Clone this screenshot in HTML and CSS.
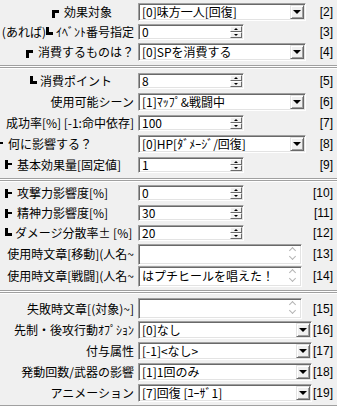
FILE: index.html
```html
<!DOCTYPE html>
<html lang="ja">
<head>
    <meta charset="UTF-8">
    <meta name="viewport" content="width=device-width, initial-scale=1.0">
    <title>スキル設定</title>
    <link rel="stylesheet" href="styles.css">
</head>
<body>

<div class="panel">

    <div class="group g1">
        <div class="row">
            <div class="lbl lbl-in"><span class="bx bx-tl"></span>効果対象</div>
            <div class="combo"><span class="val">[0]味方一人[回復]</span><span class="drop"><i class="tri"></i></span></div>
            <div class="num">[2]</div>
        </div>
        <div class="row">
            <div class="lbl">(あれば) <span class="bx bx-bl"></span>ｲﾍﾞﾝﾄ番号指定</div>
            <div class="spin"><span class="val">0</span><span class="arrows"><b class="up"></b><b class="dn"></b></span></div>
            <div class="num">[3]</div>
        </div>
        <div class="row">
            <div class="lbl"><span class="bx bx-tl"></span>消費するものは？</div>
            <div class="combo"><span class="val">[0]SPを消費する</span><span class="drop"><i class="tri"></i></span></div>
            <div class="num">[4]</div>
        </div>
    </div>

    <div class="sep"></div>

    <div class="group g2">
        <div class="row">
            <div class="lbl lbl-in"><span class="bx bx-bl"></span>消費ポイント</div>
            <div class="spin"><span class="val">8</span><span class="arrows"><b class="up"></b><b class="dn"></b></span></div>
            <div class="num">[5]</div>
        </div>
        <div class="row">
            <div class="lbl">使用可能シーン</div>
            <div class="combo"><span class="val">[1]ﾏｯﾌﾟ&amp;戦闘中</span><span class="drop"><i class="tri"></i></span></div>
            <div class="num">[6]</div>
        </div>
        <div class="row">
            <div class="lbl">成功率[%] [-1:命中依存]</div>
            <div class="spin"><span class="val">100</span><span class="arrows"><b class="up"></b><b class="dn"></b></span></div>
            <div class="num">[7]</div>
        </div>
        <div class="row">
            <div class="lbl lbl-left lbl-edge"><span class="bx bx-t"></span>何に影響する？</div>
            <div class="combo"><span class="val">[0]HP[ﾀﾞﾒｰｼﾞ/回復]</span><span class="drop"><i class="tri"></i></span></div>
            <div class="num">[8]</div>
        </div>
        <div class="row">
            <div class="lbl lbl-left"><span class="bx bx-t"></span>基本効果量[固定値]</div>
            <div class="spin"><span class="val">1</span><span class="arrows"><b class="up"></b><b class="dn"></b></span></div>
            <div class="num">[9]</div>
        </div>
    </div>

    <div class="sep"></div>

    <div class="group g3">
        <div class="row">
            <div class="lbl lbl-left"><span class="bx bx-t"></span>攻撃力影響度[%]</div>
            <div class="spin"><span class="val">0</span><span class="arrows"><b class="up"></b><b class="dn"></b></span></div>
            <div class="num">[10]</div>
        </div>
        <div class="row">
            <div class="lbl lbl-left"><span class="bx bx-t"></span>精神力影響度[%]</div>
            <div class="spin"><span class="val">30</span><span class="arrows"><b class="up"></b><b class="dn"></b></span></div>
            <div class="num">[11]</div>
        </div>
        <div class="row">
            <div class="lbl lbl-left"><span class="bx bx-bl"></span>ダメージ分散率± [%]</div>
            <div class="spin"><span class="val">20</span><span class="arrows"><b class="up"></b><b class="dn"></b></span></div>
            <div class="num">[12]</div>
        </div>
        <div class="row row-memo">
            <div class="lbl">使用時文章[移動](人名~</div>
            <div class="memo"><span class="val"></span><span class="sbar"><i class="chev-up"></i><i class="chev-dn"></i></span></div>
            <div class="num">[13]</div>
        </div>
        <div class="row row-memo">
            <div class="lbl">使用時文章[戦闘](人名~</div>
            <div class="memo"><span class="val">はプチヒールを唱えた！</span><span class="sbar"><i class="chev-up"></i><i class="chev-dn"></i></span></div>
            <div class="num">[14]</div>
        </div>
    </div>

    <div class="sep"></div>

    <div class="group g4">
        <div class="row row-memo">
            <div class="lbl">失敗時文章[(対象)~]</div>
            <div class="memo"><span class="val"></span><span class="sbar"><i class="chev-up"></i><i class="chev-dn"></i></span></div>
            <div class="num">[15]</div>
        </div>
        <div class="row">
            <div class="lbl">先制・後攻行動ｵﾌﾟｼｮﾝ</div>
            <div class="combo combo-wide"><span class="val">[0]なし</span><span class="drop"><i class="tri"></i></span></div>
            <div class="num">[16]</div>
        </div>
        <div class="row">
            <div class="lbl">付与属性</div>
            <div class="combo combo-wide"><span class="val">[-1]&lt;なし&gt;</span><span class="drop"><i class="tri"></i></span></div>
            <div class="num">[17]</div>
        </div>
        <div class="row">
            <div class="lbl">発動回数/武器の影響</div>
            <div class="combo combo-wide"><span class="val">[1]1回のみ</span><span class="drop"><i class="tri"></i></span></div>
            <div class="num">[18]</div>
        </div>
        <div class="row">
            <div class="lbl">アニメーション</div>
            <div class="combo combo-wide"><span class="val">[7]回復 [ﾕｰｻﾞ1]</span><span class="drop"><i class="tri"></i></span></div>
            <div class="num">[19]</div>
        </div>
    </div>

    <div class="sep"></div>

    <div class="caption">■■■追加効果の設定■■■</div>

</div>

</body>
</html>
```

FILE: styles.css
```css
body {
    margin: 0;
    background: #f0f0f0;
    font-family: "Noto Sans CJK JP", "Noto Sans", sans-serif;
    font-size: 12px;
    color: #000;
    overflow: hidden;
}

.panel {
    width: 337px;
    height: 407px;
    overflow: hidden;
}

.group {
    display: flex;
    flex-direction: column;
}

.g1 {
    padding: 2px 0 3px;
}

.g2,
.g3 {
    padding: 1px 0 3px;
}

.g4 {
    padding: 4px 0 2px;
}

.row {
    display: flex;
    align-items: center;
    height: 20px;
}

.g2 .row,
.g4 .row {
    height: 21px;
}

.row-memo {
    height: 22px;
}

.sep {
    height: 2px;
    border-top: 1px solid #a0a0a0;
    border-bottom: 1px solid #fff;
    background: linear-gradient(#fff 50%, #a0a0a0 50%);
}

/* labels */
.lbl {
    width: 138px;
    box-sizing: border-box;
    padding-right: 4px;
    display: flex;
    align-items: center;
    justify-content: flex-end;
    white-space: nowrap;
    line-height: 14px;
}

.lbl-in {
    padding-right: 26px;
}

.lbl-left {
    justify-content: flex-start;
    padding-left: 5px;
}

.lbl-edge {
    padding-left: 0;
}

.lbl-edge .bx {
    margin-left: -4px;
}

.bx {
    display: inline-block;
    box-sizing: border-box;
    width: 7px;
    height: 8px;
    margin-right: 5px;
    border-color: #000;
    border-style: solid;
    border-width: 0;
}

.bx-tl {
    border-top-width: 3px;
    border-left-width: 3px;
    margin-top: 4px;
}

.bx-bl {
    border-bottom-width: 3px;
    border-left-width: 3px;
    margin-top: -2px;
    margin-right: 3px;
}

.bx-t {
    border-left-width: 3px;
    height: 9px;
    background: linear-gradient(#000, #000) 0 3px / 100% 2px no-repeat;
}

/* number column */
.num {
    margin-left: auto;
    padding-right: 4px;
    font-family: "Liberation Sans", sans-serif;
    font-size: 12px;
}

/* shared sunken edit frame */
.combo,
.spin,
.memo {
    position: relative;
    box-sizing: border-box;
    background: #fff;
    border: 1px solid;
    border-color: #a0a0a0 #fff #fff #a0a0a0;
    box-shadow: inset 1px 1px #696969, inset -1px -1px #e3e3e3;
    display: flex;
    align-items: center;
}

.combo {
    width: 168px;
    height: 18px;
}

.combo-wide {
    width: 174px;
}

.val {
    padding-left: 3px;
    white-space: nowrap;
    line-height: 14px;
}

.drop {
    margin-left: auto;
    margin-right: 1px;
    box-sizing: border-box;
    width: 14px;
    height: 14px;
    background: #f0f0f0;
    border: 1px solid;
    border-color: #e3e3e3 #696969 #696969 #e3e3e3;
    box-shadow: inset 1px 1px #fff, inset -1px -1px #a0a0a0;
    display: flex;
    align-items: center;
    justify-content: center;
}

.tri {
    width: 0;
    height: 0;
    border-left: 4px solid transparent;
    border-right: 4px solid transparent;
    border-top: 4px solid #000;
}

/* spin edit */
.spin {
    width: 106px;
    height: 16px;
}

.arrows {
    margin-left: auto;
    margin-right: 1px;
    width: 12px;
    height: 12px;
    display: flex;
    flex-direction: column;
}

.arrows b {
    flex: 1;
    box-sizing: border-box;
    background: #f0f0f0;
    border: 1px solid;
    border-color: #fff #696969 #696969 #fff;
    display: flex;
    align-items: center;
    justify-content: center;
}

.arrows b::after {
    content: "";
    width: 0;
    height: 0;
    border-left: 2px solid transparent;
    border-right: 2px solid transparent;
}

.arrows .up::after {
    border-bottom: 2px solid #000;
}

.arrows .dn::after {
    border-top: 2px solid #000;
}

/* memo with scroll bar */
.memo {
    width: 164px;
    height: 21px;
    align-items: flex-start;
}

.memo .val {
    padding-top: 2px;
}

.sbar {
    margin-left: auto;
    margin-right: 2px;
    width: 13px;
    height: 17px;
    display: flex;
    flex-direction: column;
    align-items: center;
    justify-content: space-between;
    padding: 1px 0;
    box-sizing: border-box;
}

.sbar i {
    width: 5px;
    height: 5px;
    border: solid #b4b4b4;
    border-width: 1px 0 0 1px;
    box-sizing: border-box;
}

.chev-up {
    transform: translateY(2px) rotate(45deg);
}

.chev-dn {
    transform: translateY(-2px) rotate(225deg);
}

.caption {
    padding-top: 3px;
    text-align: center;
    font-weight: bold;
    letter-spacing: 1px;
}
```
